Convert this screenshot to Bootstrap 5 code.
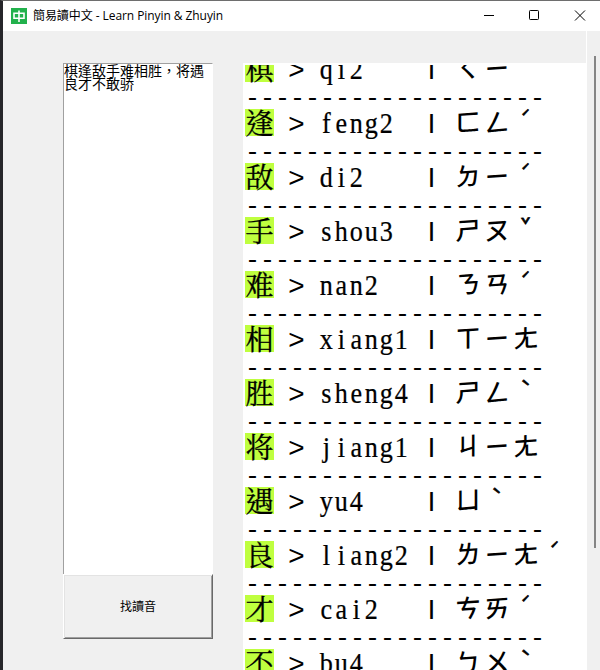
<!DOCTYPE html>
<html lang="zh-Hant">
<head>
<meta charset="utf-8">
<title>簡易讀中文 - Learn Pinyin &amp; Zhuyin</title>
<link href="https://cdn.jsdelivr.net/npm/bootstrap@5.3.0/dist/css/bootstrap.min.css" rel="stylesheet">
<style>
  html, body { height: 670px; overflow: hidden; }
  body { background: #f0f0f0; color: #000; font-family: "Open Sans", "Noto Sans CJK TC", sans-serif; }
  .app-window { width: 600px; height: 670px; border-left: 3px solid #26262a; border-top: 1px solid #6e6e6e; }
  .titlebar { height: 30px; font-size: 12px; line-height: 30px; padding-left: 8px; }
  .app-name { margin-left: 6px; letter-spacing: -.07px; white-space: nowrap; }
  .work-area { height: 639px; padding-left: 60px; }
  .side-col { width: 150px; margin-top: 32px; }
  .source-text { height: 511px; border: 1px solid #a0a0a0; border-right-color: #fff; border-bottom: 0; border-radius: 0; padding: 0; resize: none; outline: 0;
    font: 14px/13px "Noto Sans CJK SC", sans-serif; overflow: hidden; color: #000; background: #fff; }
  .lookup-btn { height: 65px; border-radius: 0; font-size: 12px; padding: 0; color: #000; background: #f0f0f0;
    border: 1px solid; border-color: #fff #696969 #696969 #fff; box-shadow: inset 1px 1px #e3e3e3, inset -1px -1px #a0a0a0; }
  .result-col { width: 344px; margin-left: 30px; border-right: 1px solid #fff; }
  .result-pane { margin-top: 32px; height: 607px; padding: 2px 0 0 2px; }
  .result-clip { height: 605px; }
  .result-list { margin-top: -10px; }
  .entry { height: 27px; }
  .hanzi { width: 29px; height: 27px; background: #bfff3f; font: 28px/27px "Noto Serif CJK TC", "Noto Sans CJK TC", sans-serif; text-align: center; -webkit-text-stroke: .3px #000; }
  .rule-line { height: 27px; font: 25px/23px "Liberation Mono", monospace; white-space: pre; padding-top: 6px; }
  .glyph-row { overflow: visible; }
  .pinyin { font: 29px "Liberation Serif", serif; text-anchor: middle; stroke: #000; stroke-width: .25px; }
  .sign { font: 28px "Liberation Mono", monospace; text-anchor: middle; }
  .bar { font: bold 20px "Liberation Mono", monospace; text-anchor: middle; }
  .zhuyin { font: 500 25px "Noto Sans CJK TC", sans-serif; text-anchor: middle; }
  .tone { font-size: 16px; stroke: #000; stroke-width: .7px; }
  .scroll-col { width: 10px; margin-top: 25px; }
  .scroll-thumb { width: 2px; height: 492px; background: #858585; margin-left: 7px; }
</style>
<script src="https://cdn.jsdelivr.net/npm/bootstrap@5.3.0/dist/js/bootstrap.bundle.min.js"></script>
</head>
<body>
<div class="app-window">
  <header class="titlebar d-flex align-items-center bg-white">
    <svg width="16" height="16" viewBox="0 0 16 16"><path fill="#22b14c" d="M0 0h16v16H0z"/><path fill="none" stroke="#fff" stroke-width="1.6" d="M3 5.3h10v5H3zM8 2.5v11.5"/></svg>
    <span class="app-name">簡易讀中文 - Learn Pinyin &amp; Zhuyin</span>
    <svg class="ms-auto" width="120" height="30" viewBox="480 1 120 30" fill="none" stroke="#000" stroke-width="1"><path d="M484 15.5h10"/><rect x="529.5" y="10.5" width="9" height="9" rx=".8"/><path d="M575 10.5l10 10M585 10.5l-10 10"/></svg>
  </header>
  <main class="work-area d-flex">
    <section class="side-col d-flex flex-column">
      <textarea class="source-text w-100" spellcheck="false">棋逢敌手难相胜，将遇良才不敢骄</textarea>
      <button class="lookup-btn btn w-100" type="button">找讀音</button>
    </section>
    <section class="result-col">
      <div class="result-pane bg-white">
        <div class="result-clip overflow-hidden"><div class="result-list" id="results"></div></div>
      </div>
    </section>
    <aside class="scroll-col"><div class="scroll-thumb"></div></aside>
  </main>
</div>
<script>
  const entries = [
    ["棋", "qi2", "ㄑㄧ", ""], ["逢", "feng2", "ㄈㄥ", "ˊ"], ["敌", "di2", "ㄉㄧ", "ˊ"],
    ["手", "shou3", "ㄕㄡ", "ˇ"], ["难", "nan2", "ㄋㄢ", "ˊ"], ["相", "xiang1", "ㄒㄧㄤ", ""],
    ["胜", "sheng4", "ㄕㄥ", "ˋ"], ["将", "jiang1", "ㄐㄧㄤ", ""], ["遇", "yu4", "ㄩ", "ˋ"],
    ["良", "liang2", "ㄌㄧㄤ", "ˊ"], ["才", "cai2", "ㄘㄞ", "ˊ"], ["不", "bu4", "ㄅㄨ", "ˋ"]
  ];
  // Monospaced columns: 15px per Latin cell, 29px per full-width cell.
  const xs = (text, start, step) => [...text].map((_, i) => (start + i * step).toFixed(2)).join(" ");
  const squeeze = 0.9;
  // Brush-style lettering: each symbol rises slightly to the right around its own centre.
  const slant = -0.07;
  const ys = (text, start, step) => [...text].map((_, i) => (22.5 - slant * (start + i * step)).toFixed(2)).join(" ");
  document.getElementById("results").innerHTML = entries.map(([hanzi, pinyin, zhuyin, tone]) => `
    <div class="entry d-flex">
      <span class="hanzi">${hanzi}</span>
      <svg class="glyph-row" width="310" height="27">
        <text class="sign" x="22.3" y="24">&gt;</text>
        <text class="pinyin" transform="scale(${squeeze} 1)" x="${xs(pinyin, 52.3 / squeeze, 15 / squeeze)}" y="23.5">${pinyin}</text>
        <text class="bar" x="157.4" y="20">|</text>
        <text class="zhuyin" transform="matrix(1 ${slant} 0 1 0 0)" x="${xs(zhuyin, 194, 29)}" y="${ys(zhuyin, 194, 29)}">${zhuyin}${tone && `<tspan class="tone" x="${194 + zhuyin.length * 29 - 0.5}" y="${14 - slant * (194 + zhuyin.length * 29)}">${tone}</tspan>`}</text>
      </svg>
    </div>
    <div class="rule-line">--------------------</div>`).join("");
</script>
</body>
</html>
